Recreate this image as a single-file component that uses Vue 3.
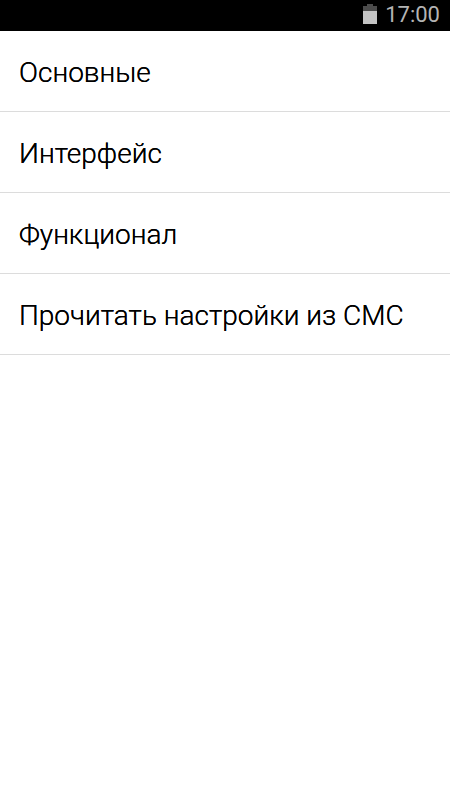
<script setup>
const items = ['Основные', 'Интерфейс', 'Функционал', 'Прочитать настройки из СМС']
</script>

<template>
  <div class="screen">
    <header class="status">
      <svg class="battery" width="14" height="20" viewBox="0 0 14 20" aria-hidden="true">
        <path d="M4 0h6v2h4v5H0V2h4z" fill="#4c4c4c" />
        <path d="M0 7h14v13H0z" fill="#c4c4c4" />
      </svg>
      <time class="clock">17:00</time>
    </header>
    <nav class="list">
      <a v-for="item in items" :key="item" class="row" href="#">{{ item }}</a>
    </nav>
  </div>
</template>

<style>
body {
  background: #fff;
}
</style>

<style scoped>
.screen {
  font-family: Roboto, "Noto Sans", sans-serif;
}
.status {
  display: flex;
  align-items: flex-start;
  justify-content: flex-end;
  gap: 8px;
  padding: 0 10px 1px;
  background: #000;
}
.battery {
  margin-top: 4px;
}
.clock {
  font-size: 22px;
  line-height: 30px;
  color: #b4b4b4;
}
.row {
  display: block;
  padding: 22px 19px 18px;
  border-bottom: 1px solid #dcdcdc;
  font-size: 28px;
  font-weight: 300;
  line-height: 40px;
  color: #000;
  text-decoration: none;
  text-shadow: 0 0 0 #000;
}
</style>
